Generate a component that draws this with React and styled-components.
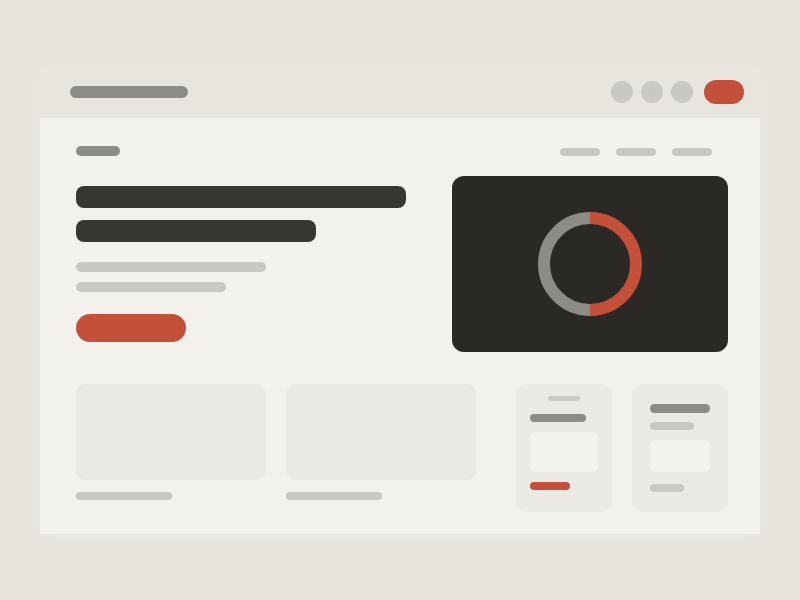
import React from "react";
import styled, { createGlobalStyle } from "styled-components";

const GlobalStyle = createGlobalStyle`
  html, body {
    margin: 0;
    padding: 0;
    background: #e6e3dc;
    font-family: "Liberation Sans", Arial, sans-serif;
  }
`;

const Page = styled.div`
  width: 800px;
  height: 600px;
  padding-top: 70px;
  box-sizing: border-box;
  display: flex;
  flex-direction: column;
  align-items: center;
  background: #e6e3dc;
`;

const Frame = styled.div`
  width: 720px;
  display: flex;
  flex-direction: column;
  box-shadow: 0 0 18px rgba(240, 238, 232, 0.6);
`;

const TitleBar = styled.div`
  height: 48px;
  box-sizing: border-box;
  padding: 0 16px 4px 30px;
  display: flex;
  align-items: center;
  justify-content: space-between;
  background: #e8e5df;
`;

const Bar = styled.div`
  width: ${(p) => p.$w}px;
  height: ${(p) => p.$h || 8}px;
  border-radius: ${(p) => p.$r || 99}px;
  background: ${(p) => p.$c || "#cac8c2"};
  margin-top: ${(p) => p.$mt || 0}px;
  align-self: ${(p) => (p.$center ? "center" : "auto")};
  flex: none;
`;

const Controls = styled.div`
  display: flex;
  align-items: center;
  gap: 8px;
`;

const Dot = styled.div`
  width: 22px;
  height: 22px;
  border-radius: 50%;
  background: #cac8c2;
`;

const CtaPill = styled.div`
  width: 40px;
  height: 24px;
  margin-left: 3px;
  border-radius: 12px;
  background: #c4503a;
`;

const Window = styled.div`
  box-sizing: border-box;
  padding: 28px 32px 22px 36px;
  background: #f3f1ec;
  display: flex;
  flex-direction: column;
`;

const TopRow = styled.div`
  height: 10px;
  display: flex;
  justify-content: space-between;
  align-items: flex-start;
`;

const Nav = styled.div`
  display: flex;
  gap: 16px;
  margin: 2px 16px 0 0;
`;

const Hero = styled.div`
  margin-top: 20px;
  display: flex;
  justify-content: space-between;
`;

const HeroText = styled.div`
  padding-top: 10px;
  display: flex;
  flex-direction: column;
`;

const Button = styled.div`
  width: 110px;
  height: 28px;
  margin-top: 22px;
  border-radius: 14px;
  background: #c4503a;
`;

const Media = styled.div`
  width: 276px;
  height: 176px;
  border-radius: 12px;
  background: #2b2926;
  display: flex;
  align-items: center;
  justify-content: center;
`;

const Cards = styled.div`
  margin-top: 32px;
  display: flex;
  align-items: flex-start;
`;

const Tile = styled.div`
  width: 190px;
  margin-right: ${(p) => p.$gap}px;
  display: flex;
  flex-direction: column;
`;

const Thumb = styled.div`
  height: 96px;
  border-radius: 10px;
  background: #eae8e3;
  margin-bottom: 12px;
`;

const Mini = styled.div`
  width: 96px;
  height: 128px;
  box-sizing: border-box;
  margin-right: ${(p) => p.$gap || 0}px;
  padding: ${(p) => p.$pad};
  border-radius: 12px;
  background: #ebe9e4;
  display: flex;
  flex-direction: column;
  align-items: flex-start;
`;

const MiniBox = styled.div`
  width: ${(p) => p.$w}px;
  height: ${(p) => p.$h}px;
  margin-top: ${(p) => p.$mt}px;
  border-radius: 6px;
  background: #f4f2ed;
`;

const Ring = () => (
  <svg width="104" height="104" viewBox="0 0 104 104">
    <path d="M52 6 A46 46 0 0 0 52 98" fill="none" stroke="#8d8b85" strokeWidth="12" />
    <path d="M52 6 A46 46 0 0 1 52 98" fill="none" stroke="#c4503a" strokeWidth="12" />
  </svg>
);

export default function App() {
  return (
    <>
      <GlobalStyle />
      <Page>
        <Frame>
          <TitleBar>
            <Bar $w={118} $h={12} $c="#8d8b85" />
            <Controls>
              <Dot />
              <Dot />
              <Dot />
              <CtaPill />
            </Controls>
          </TitleBar>
          <Window>
            <TopRow>
              <Bar $w={44} $h={10} $c="#8d8b85" />
              <Nav>
                <Bar $w={40} />
                <Bar $w={40} />
                <Bar $w={40} />
              </Nav>
            </TopRow>
            <Hero>
              <HeroText>
                <Bar $w={330} $h={22} $r={8} $c="#383632" />
                <Bar $w={240} $h={22} $r={8} $c="#383632" $mt={12} />
                <Bar $w={190} $h={10} $mt={20} />
                <Bar $w={150} $h={10} $mt={10} />
                <Button />
              </HeroText>
              <Media>
                <Ring />
              </Media>
            </Hero>
            <Cards>
              <Tile $gap={20}>
                <Thumb />
                <Bar $w={96} />
              </Tile>
              <Tile $gap={40}>
                <Thumb />
                <Bar $w={96} />
              </Tile>
              <Mini $gap={20} $pad="12px 14px">
                <Bar $w={32} $h={5} $center />
                <Bar $w={56} $h={8} $c="#8d8b85" $mt={13} />
                <MiniBox $w={68} $h={40} $mt={10} />
                <Bar $w={40} $h={8} $c="#c4503a" $mt={10} />
              </Mini>
              <Mini $pad="20px 18px">
                <Bar $w={60} $h={9} $c="#8d8b85" />
                <Bar $w={44} $h={8} $mt={9} />
                <MiniBox $w={60} $h={34} $mt={10} />
                <Bar $w={34} $h={8} $mt={12} />
              </Mini>
            </Cards>
          </Window>
        </Frame>
      </Page>
    </>
  );
}
